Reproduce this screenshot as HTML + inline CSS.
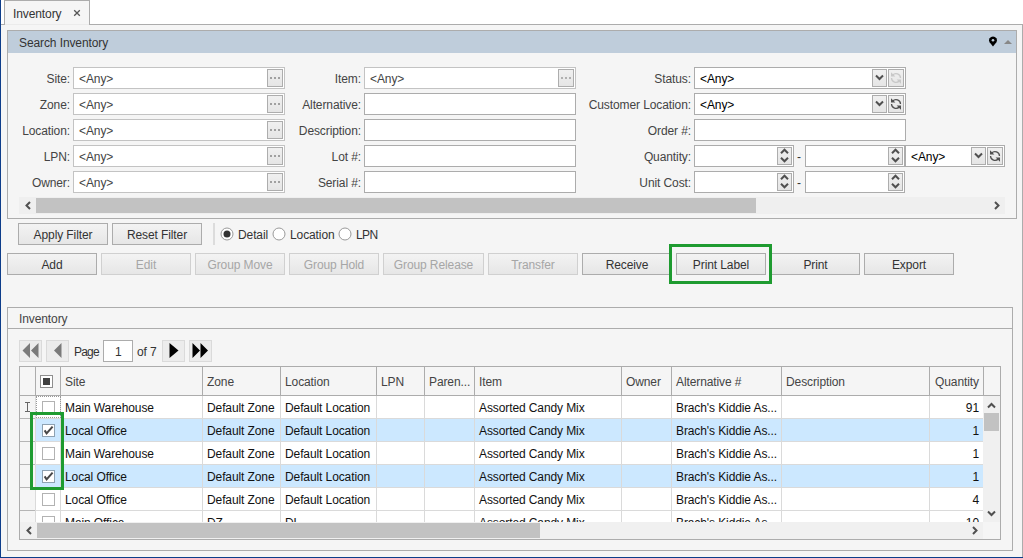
<!DOCTYPE html>
<html><head><meta charset="utf-8"><style>
html,body{margin:0;padding:0;width:1023px;height:558px;overflow:hidden;background:#fff}
body{position:relative;font-family:"Liberation Sans",sans-serif;font-size:12px}
div,svg{position:absolute;box-sizing:border-box}
.t{letter-spacing:-0.1px;white-space:nowrap;line-height:14px;height:14px;font-size:12px;font-family:"Liberation Sans",sans-serif}
</style></head><body>
<div style="left:0px;top:0px;width:1023px;height:558px;background:#ffffff"></div>
<div style="left:1px;top:24px;width:1022px;height:534px;background:#f5f5f5"></div>
<div style="left:1px;top:24px;width:1022px;height:1px;background:#acacac"></div>
<div style="left:1022px;top:24px;width:1px;height:534px;background:#acacac"></div>
<div style="left:4px;top:0px;width:86px;height:25px;background:#f5f5f5;border:1px solid #acacac;border-bottom:none;box-sizing:border-box"></div>
<div style="left:5px;top:24px;width:84px;height:1px;background:#ebebeb"></div>
<div class="t" style="left:13px;top:7px;color:#333333">Inventory</div>
<svg style="left:73px;top:9px" width="8" height="8" viewBox="0 0 8 8"><path d="M1.2 1.2 L6.8 6.8 M6.8 1.2 L1.2 6.8" stroke="#555" stroke-width="1.3"/></svg>
<div style="left:0px;top:0px;width:1px;height:558px;background:#0d3d8a"></div>
<div style="left:0px;top:557px;width:1023px;height:1px;background:#0d3d8a"></div>
<div style="left:7px;top:30px;width:1010px;height:189px;border:1px solid #acacac;box-sizing:border-box"></div>
<div style="left:8px;top:31px;width:1008px;height:22px;background:#bfcddb"></div>
<div class="t" style="left:19px;top:36px;color:#333">Search Inventory</div>
<svg style="left:988px;top:36.3px" width="10" height="11" viewBox="0 0 10 11"><path d="M5 10.5 L1.6 6.2 A3.9 3.9 0 1 1 8.4 6.2 Z" fill="#000"/><circle cx="5" cy="4.3" r="1.3" fill="#bfcddb"/></svg>
<svg style="left:1003px;top:39px" width="10" height="6" viewBox="0 0 10 6"><path d="M1 5 L5 1 L9 5 Z" fill="#888"/></svg>
<div class="t" style="right:953px;top:72px;color:#444">Site:</div>
<div style="left:73px;top:67px;width:212px;height:22px;background:#fff;border:1px solid #c3c3c3;box-sizing:border-box"></div>
<div class="t" style="left:79px;top:72px;color:#444">&lt;Any&gt;</div>
<div style="left:267px;top:69px;width:16px;height:18px;background:linear-gradient(#f0f0f0,#e5e5e5);border:1px solid #adadad;box-sizing:border-box"></div>
<div style="left:270px;top:77px;width:2px;height:2px;background:#a0a0a0"></div>
<div style="left:274px;top:77px;width:2px;height:2px;background:#a0a0a0"></div>
<div style="left:278px;top:77px;width:2px;height:2px;background:#a0a0a0"></div>
<div class="t" style="right:662px;top:72px;color:#444">Item:</div>
<div style="left:364px;top:67px;width:212px;height:22px;background:#fff;border:1px solid #c3c3c3;box-sizing:border-box"></div>
<div class="t" style="left:370px;top:72px;color:#444">&lt;Any&gt;</div>
<div style="left:558px;top:69px;width:16px;height:18px;background:linear-gradient(#f0f0f0,#e5e5e5);border:1px solid #adadad;box-sizing:border-box"></div>
<div style="left:561px;top:77px;width:2px;height:2px;background:#b0b0b0"></div>
<div style="left:565px;top:77px;width:2px;height:2px;background:#b0b0b0"></div>
<div style="left:569px;top:77px;width:2px;height:2px;background:#b0b0b0"></div>
<div class="t" style="right:332px;top:72px;color:#444">Status:</div>
<div style="left:694px;top:67px;width:212px;height:22px;background:#fff;border:1px solid #acacac;box-sizing:border-box"></div>
<div class="t" style="left:700px;top:72px;color:#000">&lt;Any&gt;</div>
<div style="left:872px;top:69px;width:15px;height:18px;background:linear-gradient(#f0f0f0,#e5e5e5);border:1px solid #adadad;box-sizing:border-box"></div>
<svg style="left:875px;top:74px" width="9" height="7" viewBox="0 0 9 7"><path d="M1 1.5 L4.5 5 L8 1.5" stroke="#505050" stroke-width="2" fill="none"/></svg>
<div style="left:888px;top:69px;width:16px;height:18px;background:linear-gradient(#f0f0f0,#e5e5e5);border:1px solid #adadad;box-sizing:border-box"></div>
<svg style="left:890px;top:72px" width="12" height="12" viewBox="0 0 12 12"><path d="M2.6 3.2 A4.5 4.5 0 0 1 10.5 6" stroke="#c8c8c8" stroke-width="1.3" fill="none"/><path d="M1 0.3 L1 4.6 L5.4 4.6 Z" fill="#c8c8c8"/><path d="M1.5 6 A4.5 4.5 0 0 0 9.4 8.8" stroke="#c8c8c8" stroke-width="1.3" fill="none"/><path d="M11 11.7 L11 7.4 L6.6 7.4 Z" fill="#c8c8c8"/></svg>
<div class="t" style="right:953px;top:98px;color:#444">Zone:</div>
<div style="left:73px;top:93px;width:212px;height:22px;background:#fff;border:1px solid #c3c3c3;box-sizing:border-box"></div>
<div class="t" style="left:79px;top:98px;color:#444">&lt;Any&gt;</div>
<div style="left:267px;top:95px;width:16px;height:18px;background:linear-gradient(#f0f0f0,#e5e5e5);border:1px solid #adadad;box-sizing:border-box"></div>
<div style="left:270px;top:103px;width:2px;height:2px;background:#a0a0a0"></div>
<div style="left:274px;top:103px;width:2px;height:2px;background:#a0a0a0"></div>
<div style="left:278px;top:103px;width:2px;height:2px;background:#a0a0a0"></div>
<div class="t" style="right:662px;top:98px;color:#444">Alternative:</div>
<div style="left:364px;top:93px;width:212px;height:22px;background:#fff;border:1px solid #acacac;box-sizing:border-box"></div>
<div class="t" style="right:332px;top:98px;color:#444">Customer Location:</div>
<div style="left:694px;top:93px;width:212px;height:22px;background:#fff;border:1px solid #acacac;box-sizing:border-box"></div>
<div class="t" style="left:700px;top:98px;color:#000">&lt;Any&gt;</div>
<div style="left:872px;top:95px;width:15px;height:18px;background:linear-gradient(#f0f0f0,#e5e5e5);border:1px solid #adadad;box-sizing:border-box"></div>
<svg style="left:875px;top:100px" width="9" height="7" viewBox="0 0 9 7"><path d="M1 1.5 L4.5 5 L8 1.5" stroke="#505050" stroke-width="2" fill="none"/></svg>
<div style="left:888px;top:95px;width:16px;height:18px;background:linear-gradient(#f0f0f0,#e5e5e5);border:1px solid #adadad;box-sizing:border-box"></div>
<svg style="left:890px;top:98px" width="12" height="12" viewBox="0 0 12 12"><path d="M2.6 3.2 A4.5 4.5 0 0 1 10.5 6" stroke="#505050" stroke-width="1.3" fill="none"/><path d="M1 0.3 L1 4.6 L5.4 4.6 Z" fill="#505050"/><path d="M1.5 6 A4.5 4.5 0 0 0 9.4 8.8" stroke="#505050" stroke-width="1.3" fill="none"/><path d="M11 11.7 L11 7.4 L6.6 7.4 Z" fill="#505050"/></svg>
<div class="t" style="right:953px;top:124px;color:#444">Location:</div>
<div style="left:73px;top:119px;width:212px;height:22px;background:#fff;border:1px solid #c3c3c3;box-sizing:border-box"></div>
<div class="t" style="left:79px;top:124px;color:#444">&lt;Any&gt;</div>
<div style="left:267px;top:121px;width:16px;height:18px;background:linear-gradient(#f0f0f0,#e5e5e5);border:1px solid #adadad;box-sizing:border-box"></div>
<div style="left:270px;top:129px;width:2px;height:2px;background:#a0a0a0"></div>
<div style="left:274px;top:129px;width:2px;height:2px;background:#a0a0a0"></div>
<div style="left:278px;top:129px;width:2px;height:2px;background:#a0a0a0"></div>
<div class="t" style="right:662px;top:124px;color:#444">Description:</div>
<div style="left:364px;top:119px;width:212px;height:22px;background:#fff;border:1px solid #acacac;box-sizing:border-box"></div>
<div class="t" style="right:332px;top:124px;color:#444">Order #:</div>
<div style="left:694px;top:119px;width:212px;height:22px;background:#fff;border:1px solid #acacac;box-sizing:border-box"></div>
<div class="t" style="right:953px;top:150px;color:#444">LPN:</div>
<div style="left:73px;top:145px;width:212px;height:22px;background:#fff;border:1px solid #c3c3c3;box-sizing:border-box"></div>
<div class="t" style="left:79px;top:150px;color:#444">&lt;Any&gt;</div>
<div style="left:267px;top:147px;width:16px;height:18px;background:linear-gradient(#f0f0f0,#e5e5e5);border:1px solid #adadad;box-sizing:border-box"></div>
<div style="left:270px;top:155px;width:2px;height:2px;background:#a0a0a0"></div>
<div style="left:274px;top:155px;width:2px;height:2px;background:#a0a0a0"></div>
<div style="left:278px;top:155px;width:2px;height:2px;background:#a0a0a0"></div>
<div class="t" style="right:662px;top:150px;color:#444">Lot #:</div>
<div style="left:364px;top:145px;width:212px;height:22px;background:#fff;border:1px solid #acacac;box-sizing:border-box"></div>
<div class="t" style="right:332px;top:150px;color:#444">Quantity:</div>
<div style="left:694px;top:145px;width:100px;height:22px;background:#fff;border:1px solid #acacac;box-sizing:border-box"></div>
<div style="left:777px;top:147px;width:15px;height:18px;background:linear-gradient(#f0f0f0,#e5e5e5);border:1px solid #adadad;box-sizing:border-box"></div>
<svg style="left:780px;top:147px" width="9" height="18" viewBox="0 0 9 18"><path d="M1 6.2 L4.5 2.7 L8 6.2" stroke="#505050" stroke-width="2" fill="none"/><path d="M1 10.8 L4.5 14.3 L8 10.8" stroke="#505050" stroke-width="2" fill="none"/></svg>
<div class="t" style="left:797px;top:150px;color:#333">-</div>
<div style="left:805px;top:145px;width:100px;height:22px;background:#fff;border:1px solid #acacac;box-sizing:border-box"></div>
<div style="left:888px;top:147px;width:15px;height:18px;background:linear-gradient(#f0f0f0,#e5e5e5);border:1px solid #adadad;box-sizing:border-box"></div>
<svg style="left:891px;top:147px" width="9" height="18" viewBox="0 0 9 18"><path d="M1 6.2 L4.5 2.7 L8 6.2" stroke="#505050" stroke-width="2" fill="none"/><path d="M1 10.8 L4.5 14.3 L8 10.8" stroke="#505050" stroke-width="2" fill="none"/></svg>
<div style="left:905px;top:145px;width:100px;height:22px;background:#fff;border:1px solid #acacac;box-sizing:border-box"></div>
<div class="t" style="left:911px;top:150px;color:#000">&lt;Any&gt;</div>
<div style="left:971px;top:147px;width:15px;height:18px;background:linear-gradient(#f0f0f0,#e5e5e5);border:1px solid #adadad;box-sizing:border-box"></div>
<svg style="left:974px;top:152px" width="9" height="7" viewBox="0 0 9 7"><path d="M1 1.5 L4.5 5 L8 1.5" stroke="#505050" stroke-width="2" fill="none"/></svg>
<div style="left:987px;top:147px;width:16px;height:18px;background:linear-gradient(#f0f0f0,#e5e5e5);border:1px solid #adadad;box-sizing:border-box"></div>
<svg style="left:989px;top:150px" width="12" height="12" viewBox="0 0 12 12"><path d="M2.6 3.2 A4.5 4.5 0 0 1 10.5 6" stroke="#505050" stroke-width="1.3" fill="none"/><path d="M1 0.3 L1 4.6 L5.4 4.6 Z" fill="#505050"/><path d="M1.5 6 A4.5 4.5 0 0 0 9.4 8.8" stroke="#505050" stroke-width="1.3" fill="none"/><path d="M11 11.7 L11 7.4 L6.6 7.4 Z" fill="#505050"/></svg>
<div class="t" style="right:953px;top:176px;color:#444">Owner:</div>
<div style="left:73px;top:171px;width:212px;height:22px;background:#fff;border:1px solid #c3c3c3;box-sizing:border-box"></div>
<div class="t" style="left:79px;top:176px;color:#444">&lt;Any&gt;</div>
<div style="left:267px;top:173px;width:16px;height:18px;background:linear-gradient(#f0f0f0,#e5e5e5);border:1px solid #adadad;box-sizing:border-box"></div>
<div style="left:270px;top:181px;width:2px;height:2px;background:#a0a0a0"></div>
<div style="left:274px;top:181px;width:2px;height:2px;background:#a0a0a0"></div>
<div style="left:278px;top:181px;width:2px;height:2px;background:#a0a0a0"></div>
<div class="t" style="right:662px;top:176px;color:#444">Serial #:</div>
<div style="left:364px;top:171px;width:212px;height:22px;background:#fff;border:1px solid #acacac;box-sizing:border-box"></div>
<div class="t" style="right:332px;top:176px;color:#444">Unit Cost:</div>
<div style="left:694px;top:171px;width:100px;height:22px;background:#fff;border:1px solid #acacac;box-sizing:border-box"></div>
<div style="left:777px;top:173px;width:15px;height:18px;background:linear-gradient(#f0f0f0,#e5e5e5);border:1px solid #adadad;box-sizing:border-box"></div>
<svg style="left:780px;top:173px" width="9" height="18" viewBox="0 0 9 18"><path d="M1 6.2 L4.5 2.7 L8 6.2" stroke="#505050" stroke-width="2" fill="none"/><path d="M1 10.8 L4.5 14.3 L8 10.8" stroke="#505050" stroke-width="2" fill="none"/></svg>
<div class="t" style="left:797px;top:176px;color:#333">-</div>
<div style="left:805px;top:171px;width:100px;height:22px;background:#fff;border:1px solid #acacac;box-sizing:border-box"></div>
<div style="left:888px;top:173px;width:15px;height:18px;background:linear-gradient(#f0f0f0,#e5e5e5);border:1px solid #adadad;box-sizing:border-box"></div>
<svg style="left:891px;top:173px" width="9" height="18" viewBox="0 0 9 18"><path d="M1 6.2 L4.5 2.7 L8 6.2" stroke="#505050" stroke-width="2" fill="none"/><path d="M1 10.8 L4.5 14.3 L8 10.8" stroke="#505050" stroke-width="2" fill="none"/></svg>
<div style="left:19px;top:197px;width:986px;height:17px;background:#efefef"></div>
<div style="left:36px;top:198px;width:720px;height:15px;background:#c2c2c2"></div>
<svg style="left:24px;top:201px" width="8" height="9" viewBox="0 0 8 9"><path d="M6 1 L2.5 4.5 L6 8" stroke="#505050" stroke-width="2" fill="none"/></svg>
<svg style="left:993px;top:201px" width="8" height="9" viewBox="0 0 8 9"><path d="M2 1 L5.5 4.5 L2 8" stroke="#505050" stroke-width="2" fill="none"/></svg>
<div style="left:18px;top:223px;width:90px;height:22px;background:linear-gradient(#f3f3f3,#e6e6e6);border:1px solid #acacac;box-sizing:border-box"></div>
<div class="t" style="left:18px;width:90px;text-align:center;top:228px;color:#333">Apply Filter</div>
<div style="left:112px;top:223px;width:90px;height:22px;background:linear-gradient(#f3f3f3,#e6e6e6);border:1px solid #acacac;box-sizing:border-box"></div>
<div class="t" style="left:112px;width:90px;text-align:center;top:228px;color:#333">Reset Filter</div>
<div style="left:213px;top:223px;width:2px;height:22px;background:#dcdcdc"></div>
<svg style="left:220px;top:227px" width="14" height="14" viewBox="0 0 14 14"><circle cx="7" cy="7" r="6" fill="#fff" stroke="#9a9a9a" stroke-width="1"/><circle cx="7" cy="7" r="3.5" fill="#333"/></svg>
<div class="t" style="left:238px;top:228px;color:#333">Detail</div>
<svg style="left:272px;top:227px" width="14" height="14" viewBox="0 0 14 14"><circle cx="7" cy="7" r="6" fill="#fff" stroke="#9a9a9a" stroke-width="1"/></svg>
<div class="t" style="left:290px;top:228px;color:#333">Location</div>
<svg style="left:338px;top:227px" width="14" height="14" viewBox="0 0 14 14"><circle cx="7" cy="7" r="6" fill="#fff" stroke="#9a9a9a" stroke-width="1"/></svg>
<div class="t" style="left:356px;top:228px;color:#333;letter-spacing:-0.6px">LPN</div>
<div style="left:7px;top:253px;width:90px;height:22px;background:linear-gradient(#f3f3f3,#e6e6e6);border:1px solid #acacac;box-sizing:border-box"></div>
<div class="t" style="left:7px;width:90px;text-align:center;top:258px;color:#333">Add</div>
<div style="left:101px;top:253px;width:90px;height:22px;background:linear-gradient(#f3f3f3,#e6e6e6);border:1px solid #d0d0d0;box-sizing:border-box"></div>
<div class="t" style="left:101px;width:90px;text-align:center;top:258px;color:#a6a6a6">Edit</div>
<div style="left:195px;top:253px;width:90px;height:22px;background:linear-gradient(#f3f3f3,#e6e6e6);border:1px solid #d0d0d0;box-sizing:border-box"></div>
<div class="t" style="left:195px;width:90px;text-align:center;top:258px;color:#a6a6a6">Group Move</div>
<div style="left:289px;top:253px;width:90px;height:22px;background:linear-gradient(#f3f3f3,#e6e6e6);border:1px solid #d0d0d0;box-sizing:border-box"></div>
<div class="t" style="left:289px;width:90px;text-align:center;top:258px;color:#a6a6a6">Group Hold</div>
<div style="left:383px;top:253px;width:101px;height:22px;background:linear-gradient(#f3f3f3,#e6e6e6);border:1px solid #d0d0d0;box-sizing:border-box"></div>
<div class="t" style="left:383px;width:101px;text-align:center;top:258px;color:#a6a6a6">Group Release</div>
<div style="left:488px;top:253px;width:90px;height:22px;background:linear-gradient(#f3f3f3,#e6e6e6);border:1px solid #d0d0d0;box-sizing:border-box"></div>
<div class="t" style="left:488px;width:90px;text-align:center;top:258px;color:#a6a6a6">Transfer</div>
<div style="left:582px;top:253px;width:90px;height:22px;background:linear-gradient(#f3f3f3,#e6e6e6);border:1px solid #acacac;box-sizing:border-box"></div>
<div class="t" style="left:582px;width:90px;text-align:center;top:258px;color:#333">Receive</div>
<div style="left:676px;top:253px;width:90px;height:22px;background:linear-gradient(#f3f3f3,#e6e6e6);border:1px solid #acacac;box-sizing:border-box"></div>
<div class="t" style="left:676px;width:90px;text-align:center;top:258px;color:#333">Print Label</div>
<div style="left:771px;top:253px;width:89px;height:22px;background:linear-gradient(#f3f3f3,#e6e6e6);border:1px solid #acacac;box-sizing:border-box"></div>
<div class="t" style="left:771px;width:89px;text-align:center;top:258px;color:#333">Print</div>
<div style="left:864px;top:253px;width:90px;height:22px;background:linear-gradient(#f3f3f3,#e6e6e6);border:1px solid #acacac;box-sizing:border-box"></div>
<div class="t" style="left:864px;width:90px;text-align:center;top:258px;color:#333">Export</div>
<div style="left:669px;top:244px;width:103px;height:40px;border:3px solid #1e9b30;box-sizing:border-box"></div>
<div style="left:7px;top:307px;width:1006px;height:244px;border:1px solid #acacac;box-sizing:border-box"></div>
<div style="left:8px;top:328px;width:1004px;height:1px;background:#acacac"></div>
<div class="t" style="left:19px;top:312px;color:#444">Inventory</div>
<div style="left:19px;top:340px;width:23px;height:22px;background:#ececec;border:1px solid #dadada;box-sizing:border-box"></div>
<svg style="left:22px;top:343px" width="17" height="15" viewBox="0 0 17 15"><path d="M8 0 L0.5 7.5 L8 15 Z M16.5 0 L9 7.5 L16.5 15 Z" fill="#7a7a7a"/></svg>
<div style="left:46px;top:340px;width:23px;height:22px;background:#ececec;border:1px solid #dadada;box-sizing:border-box"></div>
<svg style="left:53px;top:343px" width="9" height="15" viewBox="0 0 9 15"><path d="M8.5 0 L1 7.5 L8.5 15 Z" fill="#7a7a7a"/></svg>
<div class="t" style="left:74px;top:345px;color:#333;letter-spacing:-0.8px">Page</div>
<div style="left:103px;top:340px;width:30px;height:22px;background:#fff;border:1px solid #acacac;box-sizing:border-box"></div>
<div class="t" style="left:115px;top:345px;color:#333">1</div>
<div class="t" style="left:137px;top:345px;color:#333">of 7</div>
<div style="left:162px;top:340px;width:23px;height:22px;background:#ececec;border:1px solid #dadada;box-sizing:border-box"></div>
<svg style="left:169px;top:343px" width="10" height="15" viewBox="0 0 10 15"><path d="M0.5 0 L9.5 7.5 L0.5 15 Z" fill="#000"/></svg>
<div style="left:189px;top:340px;width:23px;height:22px;background:#ececec;border:1px solid #dadada;box-sizing:border-box"></div>
<svg style="left:192px;top:343px" width="17" height="15" viewBox="0 0 17 15"><path d="M0.5 0 L8 7.5 L0.5 15 Z M8.5 0 L16 7.5 L8.5 15 Z" fill="#000"/></svg>
<div style="left:19px;top:366px;width:982px;height:174px;background:#fff;border:1px solid #acacac;box-sizing:border-box"></div>
<div style="left:20px;top:367px;width:980px;height:28px;background:#f5f5f5"></div>
<div style="left:20px;top:395px;width:980px;height:1px;background:#acacac"></div>
<div style="left:35px;top:367px;width:1px;height:28px;background:#acacac"></div>
<div style="left:60px;top:367px;width:1px;height:28px;background:#acacac"></div>
<div style="left:202px;top:367px;width:1px;height:28px;background:#acacac"></div>
<div style="left:280px;top:367px;width:1px;height:28px;background:#acacac"></div>
<div style="left:376px;top:367px;width:1px;height:28px;background:#acacac"></div>
<div style="left:424px;top:367px;width:1px;height:28px;background:#acacac"></div>
<div style="left:474px;top:367px;width:1px;height:28px;background:#acacac"></div>
<div style="left:621px;top:367px;width:1px;height:28px;background:#acacac"></div>
<div style="left:671px;top:367px;width:1px;height:28px;background:#acacac"></div>
<div style="left:781px;top:367px;width:1px;height:28px;background:#acacac"></div>
<div style="left:929px;top:367px;width:1px;height:28px;background:#acacac"></div>
<div style="left:983px;top:367px;width:1px;height:28px;background:#acacac"></div>
<div class="t" style="left:65px;top:375px;color:#444">Site</div>
<div class="t" style="left:207px;top:375px;color:#444">Zone</div>
<div class="t" style="left:285px;top:375px;color:#444">Location</div>
<div class="t" style="left:381px;top:375px;color:#444">LPN</div>
<div class="t" style="left:429px;top:375px;color:#444">Paren...</div>
<div class="t" style="left:479px;top:375px;color:#444">Item</div>
<div class="t" style="left:626px;top:375px;color:#444">Owner</div>
<div class="t" style="left:676px;top:375px;color:#444">Alternative #</div>
<div class="t" style="left:786px;top:375px;color:#444">Description</div>
<div class="t" style="left:935px;top:375px;color:#444">Quantity</div>
<div style="left:40px;top:375px;width:13px;height:13px;background:#fff;border:1px solid #8f8f8f;box-sizing:border-box"></div>
<div style="left:43px;top:378px;width:7px;height:7px;background:#404040"></div>
<div style="left:20px;top:396px;width:964px;height:126px;overflow:hidden">
<div style="left:0px;top:0px;width:964px;height:23px;background:#ffffff"></div>
<div style="left:0px;top:0px;width:15px;height:23px;background:#f5f5f5"></div>
<div style="left:0px;top:22px;width:15px;height:1px;background:#b5b5b5"></div>
<div style="left:15px;top:22px;width:949px;height:1px;background:#dadada"></div>
<div style="left:15px;top:0px;width:1px;height:23px;background:#dadada"></div>
<div style="left:40px;top:0px;width:1px;height:23px;background:#dadada"></div>
<div style="left:182px;top:0px;width:1px;height:23px;background:#dadada"></div>
<div style="left:260px;top:0px;width:1px;height:23px;background:#dadada"></div>
<div style="left:356px;top:0px;width:1px;height:23px;background:#dadada"></div>
<div style="left:404px;top:0px;width:1px;height:23px;background:#dadada"></div>
<div style="left:454px;top:0px;width:1px;height:23px;background:#dadada"></div>
<div style="left:601px;top:0px;width:1px;height:23px;background:#dadada"></div>
<div style="left:651px;top:0px;width:1px;height:23px;background:#dadada"></div>
<div style="left:761px;top:0px;width:1px;height:23px;background:#dadada"></div>
<div style="left:909px;top:0px;width:1px;height:23px;background:#dadada"></div>
<div style="left:22px;top:5px;width:13px;height:13px;background:#fff;background-clip:padding-box;border:1px solid rgba(0,0,0,0.3);box-sizing:border-box"></div>
<div class="t" style="left:45px;top:5px;color:#111">Main Warehouse</div>
<div class="t" style="left:187px;top:5px;color:#111">Default Zone</div>
<div class="t" style="left:265px;top:5px;color:#111">Default Location</div>
<div class="t" style="left:459px;top:5px;color:#111">Assorted Candy Mix</div>
<div class="t" style="left:656px;top:5px;color:#111">Brach's Kiddie As...</div>
<div class="t" style="right:5px;top:5px;color:#111">91</div>
<div style="left:0px;top:23px;width:964px;height:23px;background:#cce8ff"></div>
<div style="left:0px;top:23px;width:15px;height:23px;background:#f5f5f5"></div>
<div style="left:0px;top:45px;width:15px;height:1px;background:#b5b5b5"></div>
<div style="left:15px;top:45px;width:949px;height:1px;background:#dadada"></div>
<div style="left:15px;top:23px;width:1px;height:23px;background:#dadada"></div>
<div style="left:40px;top:23px;width:1px;height:23px;background:#dadada"></div>
<div style="left:182px;top:23px;width:1px;height:23px;background:#dadada"></div>
<div style="left:260px;top:23px;width:1px;height:23px;background:#dadada"></div>
<div style="left:356px;top:23px;width:1px;height:23px;background:#dadada"></div>
<div style="left:404px;top:23px;width:1px;height:23px;background:#dadada"></div>
<div style="left:454px;top:23px;width:1px;height:23px;background:#dadada"></div>
<div style="left:601px;top:23px;width:1px;height:23px;background:#dadada"></div>
<div style="left:651px;top:23px;width:1px;height:23px;background:#dadada"></div>
<div style="left:761px;top:23px;width:1px;height:23px;background:#dadada"></div>
<div style="left:909px;top:23px;width:1px;height:23px;background:#dadada"></div>
<div style="left:22px;top:28px;width:13px;height:13px;background:#fff;background-clip:padding-box;border:1px solid rgba(0,0,0,0.3);box-sizing:border-box"></div>
<svg style="left:23px;top:29px" width="11" height="11" viewBox="0 0 11 11"><path d="M1.6 5.4 L3.6 8.4 L9.6 1.6" stroke="#484848" stroke-width="2" fill="none"/></svg>
<div class="t" style="left:45px;top:28px;color:#111">Local Office</div>
<div class="t" style="left:187px;top:28px;color:#111">Default Zone</div>
<div class="t" style="left:265px;top:28px;color:#111">Default Location</div>
<div class="t" style="left:459px;top:28px;color:#111">Assorted Candy Mix</div>
<div class="t" style="left:656px;top:28px;color:#111">Brach's Kiddie As...</div>
<div class="t" style="right:5px;top:28px;color:#111">1</div>
<div style="left:0px;top:46px;width:964px;height:23px;background:#ffffff"></div>
<div style="left:0px;top:46px;width:15px;height:23px;background:#f5f5f5"></div>
<div style="left:0px;top:68px;width:15px;height:1px;background:#b5b5b5"></div>
<div style="left:15px;top:68px;width:949px;height:1px;background:#dadada"></div>
<div style="left:15px;top:46px;width:1px;height:23px;background:#dadada"></div>
<div style="left:40px;top:46px;width:1px;height:23px;background:#dadada"></div>
<div style="left:182px;top:46px;width:1px;height:23px;background:#dadada"></div>
<div style="left:260px;top:46px;width:1px;height:23px;background:#dadada"></div>
<div style="left:356px;top:46px;width:1px;height:23px;background:#dadada"></div>
<div style="left:404px;top:46px;width:1px;height:23px;background:#dadada"></div>
<div style="left:454px;top:46px;width:1px;height:23px;background:#dadada"></div>
<div style="left:601px;top:46px;width:1px;height:23px;background:#dadada"></div>
<div style="left:651px;top:46px;width:1px;height:23px;background:#dadada"></div>
<div style="left:761px;top:46px;width:1px;height:23px;background:#dadada"></div>
<div style="left:909px;top:46px;width:1px;height:23px;background:#dadada"></div>
<div style="left:22px;top:51px;width:13px;height:13px;background:#fff;background-clip:padding-box;border:1px solid rgba(0,0,0,0.3);box-sizing:border-box"></div>
<div class="t" style="left:45px;top:51px;color:#111">Main Warehouse</div>
<div class="t" style="left:187px;top:51px;color:#111">Default Zone</div>
<div class="t" style="left:265px;top:51px;color:#111">Default Location</div>
<div class="t" style="left:459px;top:51px;color:#111">Assorted Candy Mix</div>
<div class="t" style="left:656px;top:51px;color:#111">Brach's Kiddie As...</div>
<div class="t" style="right:5px;top:51px;color:#111">1</div>
<div style="left:0px;top:69px;width:964px;height:23px;background:#cce8ff"></div>
<div style="left:0px;top:69px;width:15px;height:23px;background:#f5f5f5"></div>
<div style="left:0px;top:91px;width:15px;height:1px;background:#b5b5b5"></div>
<div style="left:15px;top:91px;width:949px;height:1px;background:#dadada"></div>
<div style="left:15px;top:69px;width:1px;height:23px;background:#dadada"></div>
<div style="left:40px;top:69px;width:1px;height:23px;background:#dadada"></div>
<div style="left:182px;top:69px;width:1px;height:23px;background:#dadada"></div>
<div style="left:260px;top:69px;width:1px;height:23px;background:#dadada"></div>
<div style="left:356px;top:69px;width:1px;height:23px;background:#dadada"></div>
<div style="left:404px;top:69px;width:1px;height:23px;background:#dadada"></div>
<div style="left:454px;top:69px;width:1px;height:23px;background:#dadada"></div>
<div style="left:601px;top:69px;width:1px;height:23px;background:#dadada"></div>
<div style="left:651px;top:69px;width:1px;height:23px;background:#dadada"></div>
<div style="left:761px;top:69px;width:1px;height:23px;background:#dadada"></div>
<div style="left:909px;top:69px;width:1px;height:23px;background:#dadada"></div>
<div style="left:22px;top:74px;width:13px;height:13px;background:#fff;background-clip:padding-box;border:1px solid rgba(0,0,0,0.3);box-sizing:border-box"></div>
<svg style="left:23px;top:75px" width="11" height="11" viewBox="0 0 11 11"><path d="M1.6 5.4 L3.6 8.4 L9.6 1.6" stroke="#484848" stroke-width="2" fill="none"/></svg>
<div class="t" style="left:45px;top:74px;color:#111">Local Office</div>
<div class="t" style="left:187px;top:74px;color:#111">Default Zone</div>
<div class="t" style="left:265px;top:74px;color:#111">Default Location</div>
<div class="t" style="left:459px;top:74px;color:#111">Assorted Candy Mix</div>
<div class="t" style="left:656px;top:74px;color:#111">Brach's Kiddie As...</div>
<div class="t" style="right:5px;top:74px;color:#111">1</div>
<div style="left:0px;top:92px;width:964px;height:23px;background:#ffffff"></div>
<div style="left:0px;top:92px;width:15px;height:23px;background:#f5f5f5"></div>
<div style="left:0px;top:114px;width:15px;height:1px;background:#b5b5b5"></div>
<div style="left:15px;top:114px;width:949px;height:1px;background:#dadada"></div>
<div style="left:15px;top:92px;width:1px;height:23px;background:#dadada"></div>
<div style="left:40px;top:92px;width:1px;height:23px;background:#dadada"></div>
<div style="left:182px;top:92px;width:1px;height:23px;background:#dadada"></div>
<div style="left:260px;top:92px;width:1px;height:23px;background:#dadada"></div>
<div style="left:356px;top:92px;width:1px;height:23px;background:#dadada"></div>
<div style="left:404px;top:92px;width:1px;height:23px;background:#dadada"></div>
<div style="left:454px;top:92px;width:1px;height:23px;background:#dadada"></div>
<div style="left:601px;top:92px;width:1px;height:23px;background:#dadada"></div>
<div style="left:651px;top:92px;width:1px;height:23px;background:#dadada"></div>
<div style="left:761px;top:92px;width:1px;height:23px;background:#dadada"></div>
<div style="left:909px;top:92px;width:1px;height:23px;background:#dadada"></div>
<div style="left:22px;top:97px;width:13px;height:13px;background:#fff;background-clip:padding-box;border:1px solid rgba(0,0,0,0.3);box-sizing:border-box"></div>
<div class="t" style="left:45px;top:97px;color:#111">Local Office</div>
<div class="t" style="left:187px;top:97px;color:#111">Default Zone</div>
<div class="t" style="left:265px;top:97px;color:#111">Default Location</div>
<div class="t" style="left:459px;top:97px;color:#111">Assorted Candy Mix</div>
<div class="t" style="left:656px;top:97px;color:#111">Brach's Kiddie As...</div>
<div class="t" style="right:5px;top:97px;color:#111">4</div>
<div style="left:0px;top:115px;width:964px;height:23px;background:#ffffff"></div>
<div style="left:0px;top:115px;width:15px;height:23px;background:#f5f5f5"></div>
<div style="left:0px;top:137px;width:15px;height:1px;background:#b5b5b5"></div>
<div style="left:15px;top:137px;width:949px;height:1px;background:#dadada"></div>
<div style="left:15px;top:115px;width:1px;height:23px;background:#dadada"></div>
<div style="left:40px;top:115px;width:1px;height:23px;background:#dadada"></div>
<div style="left:182px;top:115px;width:1px;height:23px;background:#dadada"></div>
<div style="left:260px;top:115px;width:1px;height:23px;background:#dadada"></div>
<div style="left:356px;top:115px;width:1px;height:23px;background:#dadada"></div>
<div style="left:404px;top:115px;width:1px;height:23px;background:#dadada"></div>
<div style="left:454px;top:115px;width:1px;height:23px;background:#dadada"></div>
<div style="left:601px;top:115px;width:1px;height:23px;background:#dadada"></div>
<div style="left:651px;top:115px;width:1px;height:23px;background:#dadada"></div>
<div style="left:761px;top:115px;width:1px;height:23px;background:#dadada"></div>
<div style="left:909px;top:115px;width:1px;height:23px;background:#dadada"></div>
<div style="left:22px;top:120px;width:13px;height:13px;background:#fff;background-clip:padding-box;border:1px solid rgba(0,0,0,0.3);box-sizing:border-box"></div>
<div class="t" style="left:45px;top:120px;color:#111">Main Office</div>
<div class="t" style="left:187px;top:120px;color:#111">DZ</div>
<div class="t" style="left:265px;top:120px;color:#111">DL</div>
<div class="t" style="left:459px;top:120px;color:#111">Assorted Candy Mix</div>
<div class="t" style="left:656px;top:120px;color:#111">Brach's Kiddie As...</div>
<div class="t" style="right:5px;top:120px;color:#111">10</div>
</div>
<div style="left:36px;top:396px;width:25px;height:22px;border:1px dotted #999;box-sizing:border-box"></div>
<svg style="left:24px;top:402px" width="7" height="10" viewBox="0 0 7 10"><path d="M1 0.5 H6 M1 9.5 H6 M3.5 0.5 V9.5" stroke="#666" stroke-width="1" fill="none"/></svg>
<div style="left:983px;top:396px;width:17px;height:126px;background:#f0f0f0"></div>
<div style="left:984px;top:413px;width:15px;height:18px;background:#c2c2c2"></div>
<svg style="left:987px;top:402px" width="9" height="7" viewBox="0 0 9 7"><path d="M1 5.5 L4.5 2 L8 5.5" stroke="#505050" stroke-width="2" fill="none"/></svg>
<svg style="left:987px;top:510px" width="9" height="7" viewBox="0 0 9 7"><path d="M1 1.5 L4.5 5 L8 1.5" stroke="#505050" stroke-width="2" fill="none"/></svg>
<div style="left:20px;top:522px;width:963px;height:17px;background:#f0f0f0"></div>
<div style="left:983px;top:522px;width:17px;height:17px;background:#f5f5f5"></div>
<div style="left:37px;top:523px;width:503px;height:15px;background:#c2c2c2"></div>
<svg style="left:25px;top:526px" width="8" height="9" viewBox="0 0 8 9"><path d="M6 1 L2.5 4.5 L6 8" stroke="#505050" stroke-width="2" fill="none"/></svg>
<svg style="left:971px;top:526px" width="8" height="9" viewBox="0 0 8 9"><path d="M2 1 L5.5 4.5 L2 8" stroke="#505050" stroke-width="2" fill="none"/></svg>
<div style="left:30px;top:412px;width:34px;height:78px;border:3px solid #1e9b30;box-sizing:border-box"></div>
</body></html>
